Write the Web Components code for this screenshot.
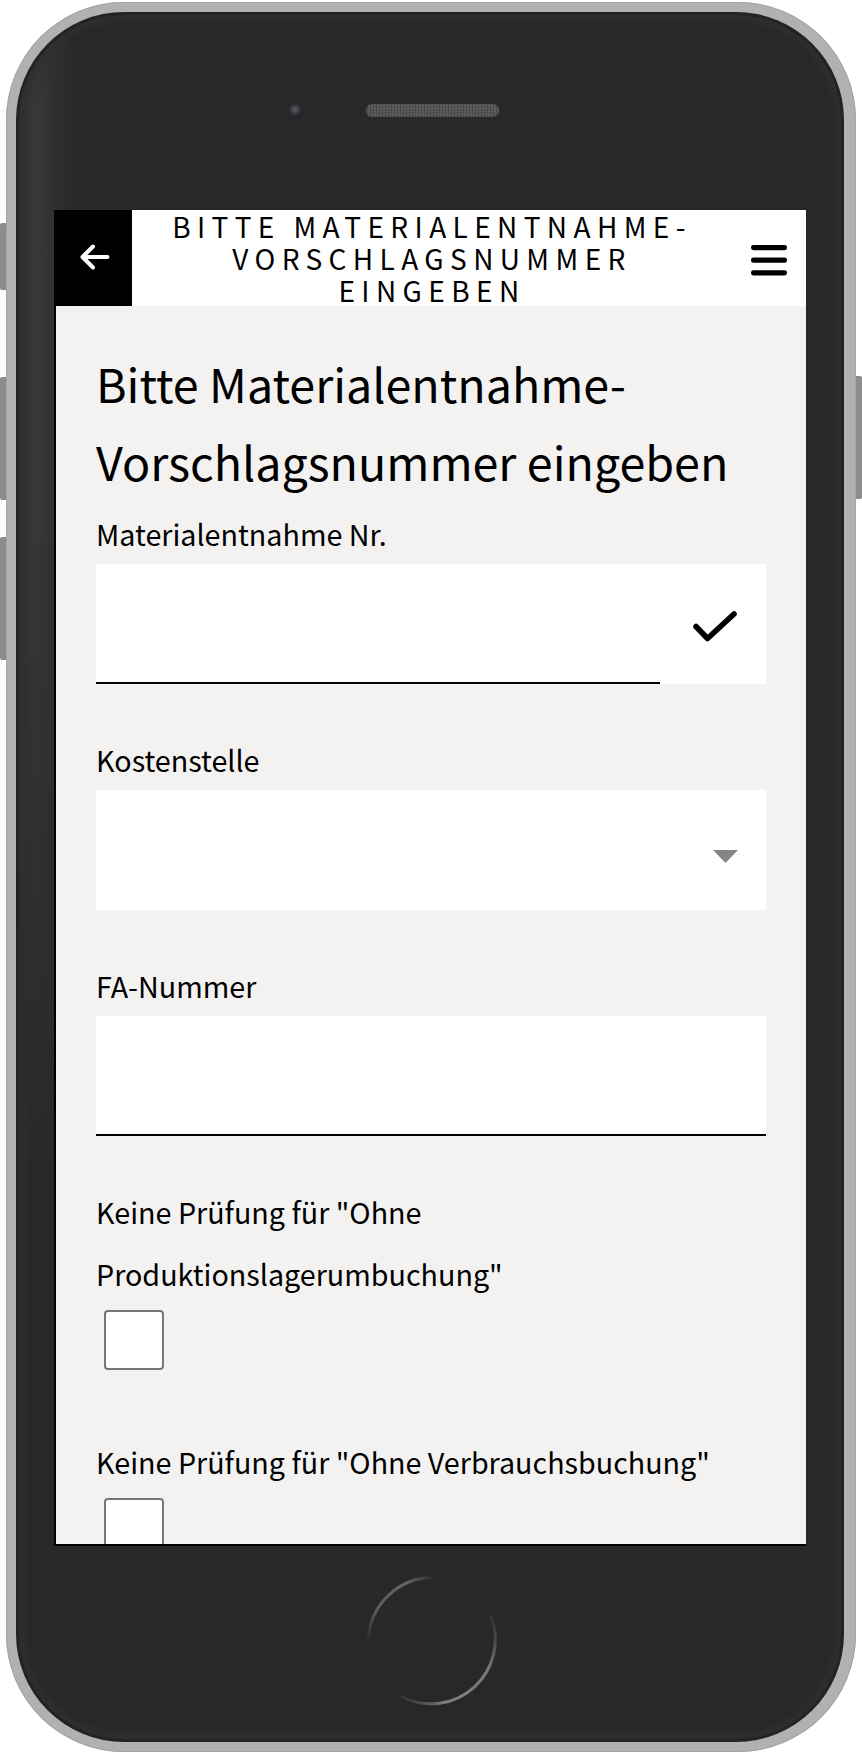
<!DOCTYPE html>
<html lang="de">
<head>
<meta charset="utf-8">
<title>Materialentnahme</title>
<style>
  html, body { margin: 0; background: #fff; }
  body { font-family: "Noto Sans CJK JP", "Noto Sans", sans-serif; color: #000; }
</style>
</head>
<body>

<phone-frame>
  <app-screen>
    <app-header slot="header">Bitte Materialentnahme-Vorschlagsnummer eingeben</app-header>
    <page-title>Bitte Materialentnahme-<br>Vorschlagsnummer eingeben</page-title>
    <text-field label="Materialentnahme Nr." confirm></text-field>
    <select-field label="Kostenstelle"></select-field>
    <text-field label="FA-Nummer"></text-field>
    <check-field label='Keine Prüfung für "Ohne Produktionslagerumbuchung"'></check-field>
    <check-field label='Keine Prüfung für "Ohne Verbrauchsbuchung"'></check-field>
  </app-screen>
</phone-frame>

<script>
//the phone picture around the app: frame, side buttons, camera, speaker, home button
class PhoneFrame extends HTMLElement {
  constructor(){
    super();
    this.attachShadow({mode: 'open'});
  }

  connectedCallback(){
    this.shadowRoot.innerHTML = `
    <style>${this.getStyle()}</style>
    <div class="side" style="left:0;top:223px;height:67px"></div>
    <div class="side" style="left:0;top:377px;height:123px"></div>
    <div class="side" style="left:0;top:537px;height:123px"></div>
    <div class="side" style="right:0;top:376px;height:123px"></div>
    <div class="body">
      <div class="bezel">
        <div class="top">
          <div class="camera"></div>
          <div class="speaker"></div>
        </div>
        <slot></slot>
        <div class="chin">
          <svg width="140" height="140" viewBox="0 0 140 140" fill="none" stroke-width="3" stroke-linecap="round">
            <defs>
              <linearGradient id="arcA" gradientUnits="userSpaceOnUse" x1="72" y1="5" x2="5" y2="72">
                <stop offset="0" stop-color="#6a6a6a" stop-opacity="0"/>
                <stop offset=".25" stop-color="#666"/>
                <stop offset=".7" stop-color="#5c5c5c"/>
                <stop offset="1" stop-color="#555" stop-opacity="0"/>
              </linearGradient>
              <linearGradient id="arcB" gradientUnits="userSpaceOnUse" x1="128" y1="44" x2="38" y2="130">
                <stop offset="0" stop-color="#666" stop-opacity=".2"/>
                <stop offset=".3" stop-color="#787878"/>
                <stop offset=".75" stop-color="#808080"/>
                <stop offset="1" stop-color="#666" stop-opacity=".1"/>
              </linearGradient>
            </defs>
            <path d="M72.5 5.5A64.5 64.5 0 0 0 5.5 70" stroke="url(#arcA)"/>
            <path d="M128 44A64.5 64.5 0 0 1 39 125" stroke="url(#arcB)"/>
          </svg>
        </div>
      </div>
    </div>
    `;
  }

  getStyle(){
    return `
    * { box-sizing: border-box; }
    :host {
      display: block;
      position: relative;
      width: 862px;
      height: 1754px;
      background: #fff;
    }
    .side {
      position: absolute;
      width: 8px;
      background: #8c8c8c;
      border-radius: 2px;
    }
    .body {
      position: absolute;
      left: 6px;
      top: 2px;
      width: 850px;
      height: 1750px;
      background: #b1b1b1;
      border-radius: 118px;
      padding: 10px 12px 10px 10px;
      box-shadow: inset 0 0 0 1px #a4a4a4;
    }
    .bezel {
      height: 100%;
      border-radius: 108px;
      display: flex;
      flex-direction: column;
      padding: 0 38px;
      background:
        linear-gradient(180deg, rgba(40,40,40,0) 30%, #282828 70%),
        linear-gradient(90deg, #333 0, #383838 18px, #303030 38px, #282828 60px, #282828 100%);
      box-shadow: inset 0 0 0 3px #232323, inset 0 0 8px 9px #2f2f2f;
    }
    .top {
      height: 198px;
      flex: none;
      display: flex;
      align-items: center;
      padding: 0 0 2px 232px;
    }
    .camera {
      width: 18px;
      height: 18px;
      border-radius: 50%;
      background: radial-gradient(circle at 50% 48%, #62626a 0, #4a4a52 18%, #2a2a30 45%, #1f1f24 80%, #242428 100%);
    }
    .speaker {
      width: 133px;
      height: 13px;
      margin-left: 62px;
      border-radius: 6px;
      background: repeating-conic-gradient(#484848 0 25%, #626262 0 50%) 0 0 / 3px 3px;
    }
    .chin {
      flex: 1;
      display: flex;
      justify-content: center;
      align-items: flex-start;
      padding: 26px 0 0 6px;
    }
    `;
  }
}

//the part of the phone that shows the app, everything below the fold is cut off
class AppScreen extends HTMLElement {
  constructor(){
    super();
    this.attachShadow({mode: 'open'});
  }

  connectedCallback(){
    this.shadowRoot.innerHTML = `
    <style>
      :host {
        display: flex;
        flex-direction: column;
        flex: none;
        box-sizing: border-box;
        height: 1336px;
        background: #f3f2f1;
        border-left: 2px solid #000;
        border-bottom: 2px solid #000;
      }
      .content {
        flex: 1;
        min-height: 0;
        overflow: hidden;
        padding: 38px 40px 0;
      }
    </style>
    <slot name="header"></slot>
    <div class="content"><slot></slot></div>
    `;
  }
}

class AppHeader extends HTMLElement {
  constructor(){
    super();
    this.attachShadow({mode: 'open'});
  }

  connectedCallback(){
    this.shadowRoot.innerHTML = `
    <style>
      * { box-sizing: border-box; }
      :host {
        display: flex;
        flex: none;
        height: 96px;
        background: #fff;
      }
      .back {
        width: 76px;
        flex: none;
        background: #000;
        display: flex;
        align-items: center;
        justify-content: center;
        padding: 0 0 2px 2px;
      }
      .title {
        flex: 1;
        min-width: 0;
        padding: 0 30px;
        text-align: center;
        font-size: 28px;
        line-height: 32px;
        letter-spacing: 6.4px;
        text-transform: uppercase;
      }
      .menu {
        width: 74px;
        flex: none;
        display: flex;
        align-items: center;
        justify-content: center;
        padding: 4px 0 0;
      }
    </style>
    <div class="back">
      <svg width="30" height="26" viewBox="0 0 30 26" fill="none" stroke="#fff" stroke-width="4" stroke-linecap="round" stroke-linejoin="round">
        <path d="M27.5 13H3M13 2.5 2.5 13 13 23.5"/>
      </svg>
    </div>
    <div class="title"><slot></slot></div>
    <div class="menu">
      <svg width="36" height="31" viewBox="0 0 36 31" fill="#000">
        <rect x="0" y="0" width="36" height="5.2" rx="2.4"/>
        <rect x="0" y="12.6" width="36" height="5.2" rx="2.4"/>
        <rect x="0" y="25.2" width="36" height="5.2" rx="2.4"/>
      </svg>
    </div>
    `;
  }
}

class PageTitle extends HTMLElement {
  constructor(){
    super();
    this.attachShadow({mode: 'open'});
  }

  connectedCallback(){
    this.shadowRoot.innerHTML = `
    <style>
      :host {
        display: block;
        font-size: 46.6px;
        line-height: 78px;
        margin-bottom: 2px;
      }
    </style>
    <slot></slot>
    `;
  }
}

//label + white box with a line below, optional check button on the right
class TextField extends HTMLElement {
  constructor(){
    super();
    this.attachShadow({mode: 'open'});
  }

  connectedCallback(){
    const hasConfirm = this.hasAttribute('confirm');
    this.shadowRoot.innerHTML = `
    <style>
      * { box-sizing: border-box; }
      :host { display: block; margin-bottom: 44px; }
      label { display: block; font-size: 28.7px; line-height: 60px; padding-top: 2px; }
      .box { display: flex; height: 120px; background: #fff; }
      input {
        flex: 1;
        min-width: 0;
        height: 100%;
        border: none;
        border-bottom: 2px solid #000;
        border-radius: 0;
        background: transparent;
        outline: none;
        padding: 0;
      }
      .confirm {
        width: 106px;
        flex: none;
        display: flex;
        align-items: center;
        justify-content: center;
        padding: 4px 0 0 4px;
      }
    </style>
    <label for="f">${this.getAttribute('label')}</label>
    <div class="box">
      <input id="f" type="text">
      ${hasConfirm ? `<div class="confirm">
        <svg width="44" height="31" viewBox="0 0 44 31" fill="none" stroke="#000" stroke-width="5.6" stroke-linecap="round" stroke-linejoin="round">
          <path d="M3 15.5 14.5 27.5 41 3"/>
        </svg>
      </div>` : ''}
    </div>
    `;
  }
}

class SelectField extends HTMLElement {
  constructor(){
    super();
    this.attachShadow({mode: 'open'});
  }

  connectedCallback(){
    this.shadowRoot.innerHTML = `
    <style>
      * { box-sizing: border-box; }
      :host { display: block; margin-bottom: 44px; }
      label { display: block; font-size: 28.7px; line-height: 60px; padding-top: 2px; }
      .box {
        display: flex;
        align-items: center;
        justify-content: flex-end;
        height: 120px;
        background: #fff;
        padding: 0 28px 0 0;
      }
      select {
        appearance: none;
        flex: 1;
        height: 100%;
        border: none;
        background: transparent;
        outline: none;
      }
      svg { flex: none; margin-top: 12px; }
    </style>
    <label for="f">${this.getAttribute('label')}</label>
    <div class="box">
      <select id="f"></select>
      <svg width="25" height="13" viewBox="0 0 25 13"><path d="M0 0H25L12.5 13Z" fill="#858585"/></svg>
    </div>
    `;
  }
}

class CheckField extends HTMLElement {
  constructor(){
    super();
    this.attachShadow({mode: 'open'});
  }

  connectedCallback(){
    this.shadowRoot.innerHTML = `
    <style>
      * { box-sizing: border-box; }
      :host { display: block; margin-bottom: 60px; }
      label { display: block; font-size: 28.7px; line-height: 62px; max-width: 640px; padding-top: 1px; }
      input {
        appearance: none;
        display: block;
        width: 60px;
        height: 60px;
        margin: 5px 0 0 8px;
        background: #fff;
        border: 2px solid #767676;
        border-radius: 4px;
      }
    </style>
    <label for="f">${this.getAttribute('label')}</label>
    <input id="f" type="checkbox">
    `;
  }
}

customElements.define('phone-frame', PhoneFrame);
customElements.define('app-screen', AppScreen);
customElements.define('app-header', AppHeader);
customElements.define('page-title', PageTitle);
customElements.define('text-field', TextField);
customElements.define('select-field', SelectField);
customElements.define('check-field', CheckField);
</script>
</body>
</html>
